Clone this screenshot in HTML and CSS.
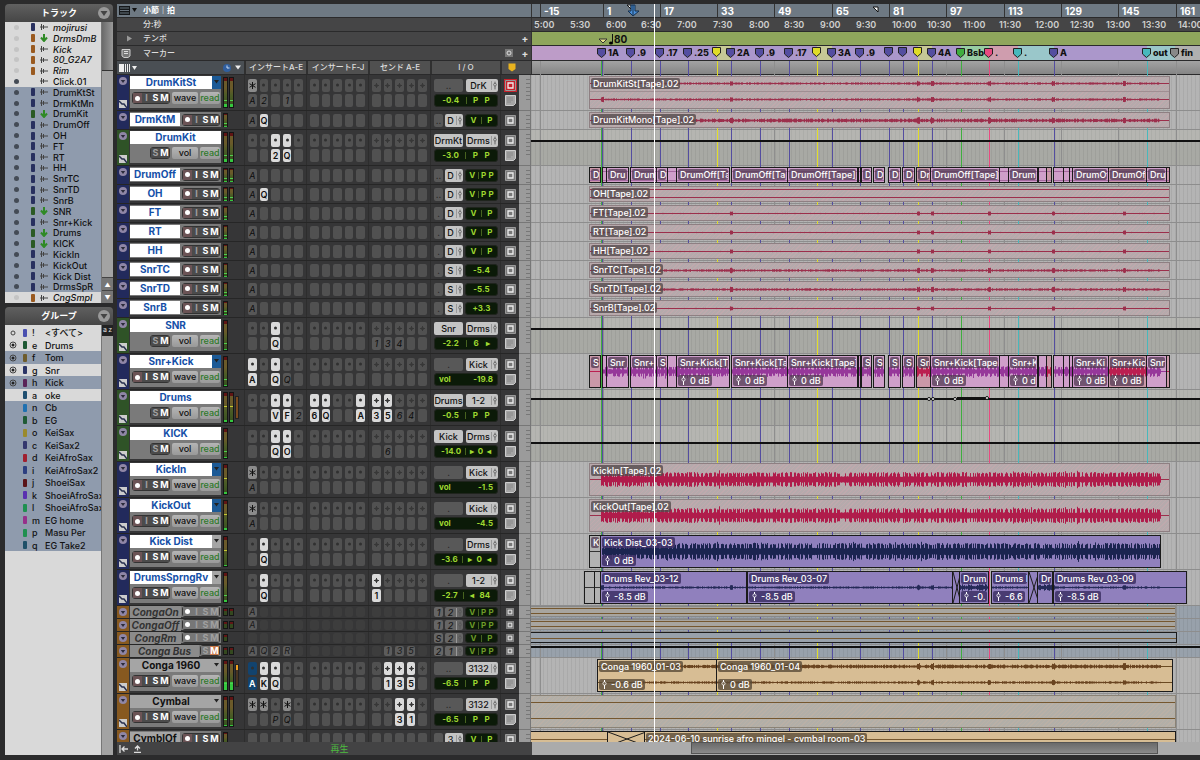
FILE: index.html
```html
<!DOCTYPE html>
<html lang="ja">

<head>
    <meta charset="UTF-8">
    <meta name="viewport" content="width=device-width, initial-scale=1.0">
    <title>Edit Window</title>
    <link rel="stylesheet" href="styles.css">
</head>

<body>

    <!-- Track list and group list -->
    <aside class="sidebar">
        <section class="panel">
            <header class="panel-header">
                <h2>トラック</h2>
                <button class="round-button" aria-label="トラックメニュー"><svg viewBox="0 0 12 12"><path d="M2.5 4h7L6 9z"/></svg></button>
            </header>
            <div class="panel-body track-panel">
                <ul class="list" id="track-list"></ul>
                <div class="side-scroll">
                    <div class="side-thumb"></div>
                    <button aria-label="上へ">▲</button>
                    <button aria-label="下へ">▼</button>
                </div>
            </div>
        </section>

        <section class="panel group-section">
            <header class="panel-header">
                <h2>グループ</h2>
                <button class="round-button" aria-label="グループメニュー"><svg viewBox="0 0 12 12"><path d="M2.5 4h7L6 9z"/></svg></button>
            </header>
            <div class="panel-body group-panel">
                <ul class="list group-list" id="group-list"></ul>
                <div class="side-scroll"><div class="sort-badge"><span>a</span><span>z</span></div></div>
            </div>
        </section>
    </aside>

    <main class="edit">
        <!-- Rulers -->
        <div class="ruler ruler-bars">
            <div class="ruler-name">
                <svg class="ruler-icon" viewBox="0 0 18 9"><path d="M0 0h11v9H0z" fill="#15181b"/><path d="M1 2h9M1 4.500h9M1 7h9" stroke="#69747e"/><path d="M13 2h5l-2.500 4z" fill="#111"/></svg>
                <b>小節｜拍</b>
            </div>
            <div class="ruler-lane" id="bar-ruler"></div>
        </div>
        <div class="ruler ruler-time">
            <div class="ruler-name"><i class="ruler-icon"></i><span>分:秒</span></div>
            <div class="ruler-lane" id="time-ruler"></div>
        </div>
        <div class="ruler ruler-tempo">
            <div class="ruler-name">
                <svg class="ruler-icon" viewBox="0 0 18 9"><path d="M8 1.500l5 3-5 3z" fill="#999"/></svg>
                <span>テンポ</span>
                <button class="plus" aria-label="テンポを追加">+</button>
            </div>
            <div class="ruler-lane" id="tempo-ruler"></div>
        </div>
        <div class="ruler ruler-marker">
            <div class="ruler-name">
                <svg class="ruler-icon" viewBox="0 0 18 9"><path d="M3 .5h8v6.500l-2 1.500H5L3 7z" fill="#777" stroke="#ccc"/><path d="M5 2.500h4M5 4.500h4" stroke="#ddd"/></svg>
                <span>マーカー</span>
                <svg class="ruler-target" viewBox="0 0 8 8"><path d="M0 0h8v8H0z" fill="#777"/><circle cx="4" cy="4" r="2" fill="none" stroke="#ddd"/></svg>
                <button class="plus" aria-label="マーカーを追加">+</button>
            </div>
            <div class="ruler-lane" id="marker-ruler"></div>
        </div>

        <!-- Column titles -->
        <div class="ruler columns">
            <div class="ruler-name">
                <button class="view-button" aria-label="表示"><svg viewBox="0 0 18 8"><path d="M0 0h5v8H0zM6 0h1v8H6zM8 0h1v8H8zM10 0h1v8h-1zM13 2h5l-2.500 4z" fill="#eee"/></svg></button>
                <button class="clock-button" aria-label="タイムベース"><svg viewBox="0 0 18 8"><circle cx="4" cy="4" r="4" fill="#315f9f"/><path d="M4 1.500V4h2.500" stroke="#cfe0f5" fill="none"/><path d="M12 1.500h6l-3 4z" fill="#eee"/></svg></button>
                <span class="col-title">インサートA-E</span>
                <span class="col-title">インサートF-J</span>
                <span class="col-title">センド A-E</span>
                <span class="col-title col-io">I / O</span>
                <span class="col-title col-note"><svg viewBox="0 0 8 9"><path d="M.5.5h7V6L4 8.500.5 6z" fill="#e9b31f"/></svg></span>
            </div>
            <div class="ruler-lane"></div>
        </div>

        <div class="tracks" id="tracks"></div>

        <footer class="footer">
            <div class="status">
                <button aria-label="先頭へ"><svg viewBox="0 0 9 8"><path d="M1 0v8M9 4H3M5.500 1.500L3 4l2.500 2.500" fill="none" stroke="#ddd" stroke-width="1.300"/></svg></button>
                <button aria-label="書き出し"><svg viewBox="0 0 9 8"><path d="M1 7.300h7M4.500 5.500V1M2 3.500L4.500 1 7 3.500" fill="none" stroke="#ddd" stroke-width="1.300"/></svg></button>
                <span class="play-state">再生</span>
            </div>
            <div class="h-scroll"><div class="h-thumb"></div></div>
        </footer>

        <!-- Marker lines and play cursor run over all lanes -->
        <div class="overlay" id="overlay"></div>
        <div class="overlay cursor-layer"><div class="cursor" id="cursor"></div></div>
    </main>

    <script src="script.js"></script>
</body>

</html>
```
FILE: styles.css
```css
/* General */
* {
    box-sizing: border-box;
}

body {
    display: flex;
    gap: 4px;
    height: 100vh;
    margin: 0;
    padding: 4px 0 5px 5px;
    overflow: hidden;
    background: #2b2b2c;
    color: #ddd;
    font-family: Inter, "Noto Sans CJK JP", sans-serif;
    font-size: 9px;
    line-height: 11px;
}

button {
    margin: 0;
    padding: 0;
    border: none;
    background: none;
    color: inherit;
    font: inherit;
    cursor: pointer;
}

svg {
    display: block;
}

/* Sidebar */
.sidebar {
    display: flex;
    flex-direction: column;
    gap: 4px;
    width: 108px;
    flex: none;
    color: #111;
}

.panel-header {
    position: relative;
    height: 18px;
    border-radius: 4px 4px 0 0;
    background: linear-gradient(#606060, #464646);
    text-align: center;
}

.panel-header h2 {
    margin: 0;
    font-size: 9px;
    line-height: 17px;
    color: #fff;
}

.round-button {
    position: absolute;
    top: 3px;
    right: 3px;
    width: 12px;
    height: 12px;
    border-radius: 50%;
    background: #999;
}

.round-button path {
    fill: #444;
}

.panel-body {
    display: flex;
    background: #a3a3a3;
}

.track-panel {
    height: 281px;
}

.group-section {
    display: flex;
    flex-direction: column;
    flex: 1;
}

.group-panel {
    flex: 1;
}

.list {
    display: flex;
    flex-direction: column;
    flex: 1;
    min-width: 0;
    margin: 0;
    padding: 0;
    list-style: none;
    background: #d9d9d9;
}

.list li {
    display: flex;
    flex: 1;
    align-items: center;
    min-height: 0;
    overflow: hidden;
    font-weight: 500;
    white-space: nowrap;
}

.list li > * {
    flex: none;
}

.track-panel li {
    gap: 5px;
    padding-left: 9px;
}

.list li.selected {
    background: #8f9bad;
}

.list li.italic {
    font-style: italic;
}

.dot {
    width: 5px;
    height: 5px;
    margin-right: 7px;
    border-radius: 50%;
    background: #444b55;
}

.dot.off {
    background: #c4c4c4;
}

.pill {
    width: 4px;
    height: 8px;
    border-radius: 1px;
}

.kind-icon {
    width: 8px;
    height: 8px;
}

.group-list {
    padding-top: 1px;
}

.group-list li {
    flex: 0 0 12px;
    padding-left: 4px;
}

.group-list li:nth-child(odd) {
    flex-basis: 13px;
}

.group-list .radio {
    width: 8px;
    height: 8px;
    margin-right: 6px;
}

.group-list .key {
    width: 13px;
    margin-left: 5px;
}

.side-scroll {
    display: flex;
    flex-direction: column;
    width: 12px;
    flex: none;
    border-left: 1px solid #777;
}

.side-thumb {
    height: 49px;
    margin-bottom: auto;
    border-bottom: 1px solid #333;
    background: linear-gradient(90deg, #6a6a6a, #999);
}

.side-scroll button {
    height: 13px;
    border-top: 1px solid #444;
    background: #777;
    color: #fff;
    font-size: 6px;
}

.sort-badge {
    display: flex;
    justify-content: space-between;
    height: 11px;
    padding: 0 1px;
    background: #222;
    color: #ddd;
    font-size: 7px;
    line-height: 9px;
}

/* Edit window */
.edit {
    position: relative;
    display: flex;
    flex-direction: column;
    flex: 1;
    min-width: 0;
    background: #3b3b3c;
}

.ruler {
    display: flex;
    flex: none;
    height: 14px;
    border-bottom: 1px solid #2a2a2b;
    background: #454546;
}

.ruler-name {
    display: flex;
    align-items: center;
    gap: 6px;
    width: 414px;
    flex: none;
    padding-left: 2px;
    font-size: 8px;
    font-weight: 500;
}

.ruler-icon {
    width: 18px;
    height: 9px;
}

.ruler-lane {
    position: relative;
    flex: 1;
    overflow: hidden;
    border-left: 1px solid #333;
}

.ruler-bars {
    background: #6e7983;
    color: #fff;
}

.plus {
    width: 12px;
    font-size: 10px;
    font-weight: bold;
}

.ruler-tempo .plus,
.ruler-target {
    margin-left: auto;
}

.ruler-target {
    width: 8px;
    height: 8px;
}

.ruler-tempo .ruler-lane {
    background: #8fa65c;
    color: #111;
}

.ruler-marker {
    height: 15px;
}

.ruler-marker .ruler-lane {
    background: #b0b0b0;
    color: #111;
}

.tick {
    position: absolute;
    top: 0;
    height: 100%;
    padding-left: 3px;
    border-left: 1px solid #333;
    font-size: 10px;
    font-weight: 700;
    line-height: 14px;
    white-space: nowrap;
}

.ruler-time .tick {
    padding-left: 1px;
    border-color: transparent;
    font-size: 9px;
    font-weight: 600;
    color: #cfcfcf;
}

.locate {
    position: absolute;
    top: 0;
    width: 14px;
    height: 13px;
}

.tempo-value {
    position: absolute;
    top: 1px;
    display: flex;
    align-items: center;
    font-size: 10px;
    font-weight: 700;
}

.tempo-value svg {
    width: 16px;
    height: 12px;
}

.zone {
    position: absolute;
    top: 0;
    height: 100%;
}

.flag {
    position: absolute;
    top: 1px;
    display: flex;
    gap: 2px;
    align-items: center;
    font-weight: 800;
    line-height: 12px;
    white-space: nowrap;
}

.flag svg {
    width: 9px;
    height: 10px;
}

.columns .ruler-name {
    gap: 0;
    background: #4a4f54;
}

.columns .ruler-lane {
    background: linear-gradient(#a3a3a3, #858585);
}

.view-button {
    width: 18px;
    height: 8px;
    margin-right: auto;
}

.clock-button {
    width: 18px;
    height: 8px;
    margin-right: 3px;
}

.col-title {
    width: 62px;
    border-left: 2px solid #303030;
    background: #505050;
    font-weight: 500;
    line-height: 13px;
    text-align: center;
    white-space: nowrap;
}

.col-io {
    width: 70px;
}

.col-note {
    width: 31px;
    height: 13px;
    padding: 2px 0 0 6px;
}

.col-note svg {
    width: 8px;
    height: 9px;
}

/* Track rows */
.tracks {
    flex: 1;
    min-height: 0;
    overflow: hidden;
}

.track {
    display: flex;
    height: 36px;
}

.track.short {
    height: 19px;
}

.track.thin {
    height: 13px;
}

.strip {
    display: flex;
    flex-direction: column;
    align-items: center;
    justify-content: space-between;
    width: 12px;
    flex: none;
    padding: 2px 0;
    border-bottom: 1px solid #252525;
    background: #222a5c;
}

.strip.green {
    background: #2f5327;
}

.strip.orange {
    background: #875920;
}

.strip svg {
    width: 8px;
    height: 8px;
}

.head {
    display: flex;
    width: 390px;
    flex: none;
    border-bottom: 1px solid #262626;
    background: #363637;
}

.body {
    display: flex;
    flex-wrap: wrap;
    align-content: space-between;
    justify-content: space-between;
    width: 91px;
    flex: none;
    margin: 1px 2px 2px 1px;
    padding-bottom: 2px;
    background: #7a7a7a;
}

.title {
    width: 82px;
    height: 13px;
    overflow: hidden;
    background: #fff;
    color: #1550a8;
    font-size: 10px;
    font-weight: 700;
    line-height: 13px;
    white-space: nowrap;
}

.wide .title {
    width: 100%;
}

.orange-track .title {
    background: #a5a5a5;
    color: #111;
}

.playlist {
    width: 9px;
    height: 13px;
    background: #1c5a96;
}

.playlist.grey {
    background: #a5a5a5;
}

.playlist path {
    fill: #222;
}

.controls {
    display: flex;
    gap: 2px;
    align-items: center;
    justify-content: flex-end;
    width: 100%;
    height: 16px;
    padding: 0 1px;
}

.rism {
    display: flex;
    align-items: center;
    border: 1px solid #333;
    border-radius: 3px;
    background: #555;
}

.rism button {
    width: 9px;
    height: 10px;
    background: #4b4b4b;
    color: #fff;
    font-size: 9px;
    font-weight: 700;
    line-height: 10px;
}

.rism .rec {
    background: #6b5355;
}

.rism .rec svg {
    width: 5px;
    height: 5px;
    margin: 0 auto;
}

.rism .dim {
    color: #a0a0a0;
}

.rism .muted {
    background: #c97a4c;
}

.mode,
.auto {
    width: 26px;
    height: 12px;
    border-radius: 2px;
    background: linear-gradient(#b5b5b5, #999);
    color: #111;
    font-weight: 500;
    line-height: 12px;
}

.auto {
    width: 20px;
    color: #2e7a2a;
}

.short .body,
.thin .body {
    align-items: center;
    align-content: center;
    flex-wrap: nowrap;
    padding: 0;
}

.short .title {
    width: 50px;
}

.short .controls,
.thin .controls {
    width: auto;
    height: 12px;
    flex: none;
}

.thin .body {
    margin: 0 2px 1px 1px;
}

.thin .title {
    width: auto;
    height: 12px;
    flex: 1;
    background: #8b8b8b;
    color: #333;
    font-style: italic;
    line-height: 12px;
}

.thin .rism button {
    height: 9px;
    background: #777;
    line-height: 9px;
}

.thin .rism .muted {
    background: #c97a4c;
}

.meters {
    display: flex;
    gap: 1px;
    width: 20px;
    flex: none;
    margin: 2px 0;
}

.meter {
    position: relative;
    width: 5px;
    border: 1px solid #151515;
    background: linear-gradient(#601414 0 12%, #6b5a2a 12% 35%, #4c5c26 60%, #35501f);
}

.meter .level {
    position: absolute;
    bottom: 0;
    left: 0;
    width: 100%;
    background: #35c83f;
}

.meter .peak {
    position: absolute;
    left: 0;
    width: 100%;
    height: 1px;
    background: #4fd04f;
}

.meter .peak.high {
    background: #c5c832;
}

.gr {
    width: 4px;
    margin: 4px 0;
    border: 1px solid #222;
    background: #7a4a1e;
}

.gr.hot {
    background: linear-gradient(#f0a020 25%, #4a3520 25%);
}

.thin .meter {
    background: linear-gradient(#601616 40%, #34481f 40%);
}

.thin .level,
.thin .peak {
    display: none;
}

.slots {
    display: grid;
    grid-template-columns: repeat(5, 1fr);
    gap: 2px 3px;
    align-content: center;
    width: 62px;
    flex: none;
    padding: 0 3px;
    border-left: 1px solid #2d2d2d;
}

.first-slots {
    margin-left: 1px;
}

.slot {
    height: 13px;
    border-radius: 2px;
    background: #515151;
    color: #2a2a2a;
    font-size: 9px;
    line-height: 13px;
}

.slot svg {
    width: 7px;
    height: 7px;
    margin: 0 auto;
}

.slot.dim {
    background: #575757;
    color: #0c0c0c;
    font-style: italic;
}

.thin .slot {
    height: 10px;
    background: #3d3d3d;
    line-height: 10px;
}

.thin .slot.dim {
    background: #5c5c5c;
    color: #1a1a1a;
}

.slot.lit {
    background: #dadada;
    color: #111;
    font-weight: 600;
}

.slot.star {
    background: #8b8b8b;
    color: #111;
}

.slot.blue {
    background: #12436e;
    color: #fff;
    font-weight: 600;
}

.io {
    display: flex;
    flex-wrap: wrap;
    gap: 2px 3px;
    align-content: center;
    width: 70px;
    flex: none;
    padding: 0 2px 0 3px;
    border-left: 1px solid #2d2d2d;
}

.port {
    display: flex;
    align-items: center;
    justify-content: center;
    width: 29px;
    height: 13px;
    overflow: hidden;
    border-radius: 2px;
    background: #c4c4c4;
    color: #111;
    font-weight: 500;
}

.port.off {
    background: #585858;
    color: #222;
}

.port.out {
    width: 32px;
    justify-content: flex-end;
}

.port.out span {
    flex: 1;
    text-align: center;
}

.port svg {
    width: 7px;
    height: 9px;
    flex: none;
    color: #555;
    border-left: 1px solid #999;
}

.led {
    display: flex;
    align-items: center;
    justify-content: space-around;
    width: 64px;
    height: 13px;
    padding: 0 4px;
    border: 1px solid #1f241d;
    border-radius: 3px;
    background: #0b1a08;
    color: #9fd830;
    font-size: 8px;
    font-weight: 700;
    line-height: 11px;
    white-space: nowrap;
}

.led.spread {
    justify-content: space-between;
}

.led i {
    width: 1px;
    height: 7px;
    background: #47631f;
}

.short .io,
.thin .io {
    flex-wrap: nowrap;
    align-items: center;
    gap: 2px;
}

.short .port,
.thin .port {
    width: 9px;
}

.short .port.out,
.thin .port.out {
    width: 18px;
}

.short .led,
.thin .led {
    width: 33px;
    padding: 0 2px;
}

.thin .port,
.thin .led {
    height: 10px;
}

.thin .port {
    background: #666;
    color: #1a1a1a;
    font-style: italic;
}

.thin .led {
    color: #6f9c28;
    line-height: 8px;
}

.notes {
    display: flex;
    flex-direction: column;
    align-items: center;
    justify-content: center;
    gap: 4px;
    flex: 1;
    border-left: 1px solid #2d2d2d;
}

.notes svg {
    width: 11px;
    height: 11px;
}

.notes .red {
    outline: 1px solid #c8202a;
}

.thin .notes svg {
    width: 8px;
    height: 8px;
}

.scale {
    width: 12px;
    flex: none;
    border-right: 1px solid #777;
    border-bottom: 1px solid #777;
    background: repeating-linear-gradient(#777 0 1px, transparent 1px 4px) 7px 4px / 5px 24px no-repeat #9b9b9b;
}

/* Lanes and clips */
.lane {
    position: relative;
    flex: 1;
    overflow: hidden;
    border-bottom: 1px solid #8d8d8d;
    background: repeating-linear-gradient(90deg, rgba(0, 0, 0, .06) 0 1px, transparent 1px 4px) #b4b4b4;
}

.lane.automation {
    background-color: #a8a9a4;
}

.lane.blue {
    background-color: #98a1ab;
}

.lane-top {
    background: rgba(255, 255, 255, .15);
}

.automation-line {
    position: relative;
    z-index: 2;
    height: 2px;
    background: #111;
}

.points {
    position: absolute;
    z-index: 3;
    top: 6px;
    width: 62px;
    height: 8px;
}

.clip {
    position: absolute;
    z-index: 2;
    top: 1px;
    bottom: 1px;
    overflow: hidden;
    border: 1px solid #1b1b1b;
}

.clip > svg {
    position: absolute;
    top: 0;
    left: 0;
}

.clip.hatched {
    border-color: #8e7f82;
    background: repeating-linear-gradient(135deg, #b5aaac 0 2px, #bfa9ad 2px 3px);
}

.clip.pink {
    background: #cf9fca;
}

.clip.rose {
    background: #ca98a8;
}

.clip.purple {
    background: #9080bd;
}

.clip.grey {
    background: #b2b2b2;
}

.clip.tan {
    background: #d7bd94;
}

.clip.stone {
    border-color: #8a8275;
    background: repeating-linear-gradient(135deg, #b2afa8 0 2px, #bab0a6 2px 3px);
}

.clip.brown {
    top: 0;
    border-color: #888;
    background: #a8a59f;
}

.clip.steel {
    top: 0;
    background: #98a1ab;
}

.clip-name,
.clip-gain {
    position: absolute;
    top: 1px;
    left: 1px;
    max-width: calc(100% - 2px);
    height: 11px;
    padding: 0 2px;
    overflow: hidden;
    border-radius: 2px;
    background: rgba(80, 58, 82, .75);
    color: #fff;
    font-weight: 500;
    white-space: nowrap;
}

.hatched .clip-name {
    background: rgba(85, 75, 78, .8);
}

.purple .clip-name,
.purple .clip-gain {
    background: rgba(65, 52, 105, .9);
}

.tan .clip-name,
.tan .clip-gain {
    background: rgba(90, 75, 55, .8);
}

.clip-gain {
    top: auto;
    bottom: 1px;
    display: flex;
    gap: 3px;
    align-items: center;
}

.clip-gain svg {
    width: 7px;
    height: 9px;
    flex: none;
}

/* Overlay */
.overlay {
    position: absolute;
    z-index: 1;
    top: 57px;
    right: 0;
    bottom: 13px;
    left: 415px;
    overflow: hidden;
    pointer-events: none;
}

.cursor-layer {
    z-index: 4;
    top: 0;
}

.line,
.cursor {
    position: absolute;
    top: 0;
    width: 1px;
    height: 100%;
}

.cursor {
    background: #fff;
}

/* Footer */
.footer {
    display: flex;
    height: 13px;
    flex: none;
}

.status {
    display: flex;
    gap: 5px;
    align-items: center;
    width: 415px;
    padding-left: 2px;
    background: #434344;
}

.status svg {
    width: 9px;
    height: 8px;
}

.play-state {
    flex: 1;
    color: #4dbb3f;
    text-align: center;
}

.h-scroll {
    flex: 1;
    padding: 0 42px 0 159px;
    background: #ababab;
}

.h-thumb {
    height: 12px;
    border: 1px solid #555;
    background: linear-gradient(#6a6a6a, #8a8a8a);
}
```
FILE: script.js
```javascript
// Window x of the first timeline pixel, all positions below are window x
const START = 532;

const NAVY = '#28305f', GREEN = '#2b5a24', RUST = '#9a5a20';

const sideTracks = [
    ['mojirusi', NAVY, 'w', 'i'], ['DrmsDmB', RUST, 'a', 'i'], ['Kick', RUST, 'w', 'i'],
    ['80_G2A7', RUST, 'w', 'i'], ['Rim', RUST, 'w', 'i'], ['Click.01', 'transparent', 'w', 'n'],
    ['DrumKtSt', NAVY, 'w', 's'], ['DrmKtMn', NAVY, 'w', 's'], ['DrumKit', GREEN, 'a', 's'],
    ['DrumOff', NAVY, 'w', 's'], ['OH', NAVY, 'w', 's'], ['FT', NAVY, 'w', 's'], ['RT', NAVY, 'w', 's'],
    ['HH', NAVY, 'w', 's'], ['SnrTC', NAVY, 'w', 's'], ['SnrTD', NAVY, 'w', 's'], ['SnrB', NAVY, 'w', 's'],
    ['SNR', GREEN, 'a', 's'], ['Snr+Kick', NAVY, 'w', 's'], ['Drums', GREEN, 'a', 's'],
    ['KICK', GREEN, 'a', 's'], ['KickIn', NAVY, 'w', 's'], ['KickOut', NAVY, 'w', 's'],
    ['Kick Dist', NAVY, 'w', 's'], ['DrmsSpR', NAVY, 'w', 's'], ['CngSmpl', RUST, 'w', 'i']
];

const groups = [
    ['!', '&lt;すべて&gt;', '#4a50b0', 0, 'o'], ['e', 'Drums', '#1f5a35', 0, 'x'], ['f', 'Tom', '#6e5c2c', 1, 'x'],
    ['g', 'Snr', '#2c3566', 0, 'x'], ['h', 'Kick', '#5a2458', 1, 'x'], ['a', 'oke', '#1f4f70', 0, ''],
    ['n', 'Cb', '#1f70b0', 1, ''], ['b', 'EG', '#1f5a35', 1, ''], ['o', 'KeiSax', '#9a8a2c', 1, ''],
    ['c', 'KeiSax2', '#34386e', 1, ''], ['d', 'KeiAfroSax', '#a02030', 1, ''], ['i', 'KeiAfroSax2', '#2c3f80', 1, ''],
    ['j', 'ShoeiSax', '#5a1418', 1, ''], ['k', 'ShoeiAfroSax', '#5a30b0', 1, ''], ['l', 'ShoeiAfroSax2', '#1f9050', 1, ''],
    ['m', 'EG home', '#96308a', 1, ''], ['p', 'Masu Per', '#1f9050', 1, ''], ['q', 'EG Take2', '#1f5068', 1, '']
];

const COLORS = { p: '#544da0', y: '#e0dc28', g: '#3fae3f', k: '#e84a80', c: '#48b8bc', n: '#888' };

const markers = [
    [602, 'p', '1A'], [631, 'p', '.9'], [660, 'p', '.17'], [688, 'p', '.25'], [717, 'y', ''],
    [731, 'p', '2A'], [760, 'p', '.9'], [789, 'p', '.17'], [817, 'y', ''], [832, 'p', '3A'],
    [860, 'p', '.9'], [889, 'p', ''], [903, 'p', ''], [918, 'y', ''], [932, 'p', '4A'],
    [961, 'g', 'Bsb'], [989, 'k', '.'], [1018, 'c', '.'], [1054, 'p', 'A'], [1147, 'c', 'out'], [1175, 'n', 'fin']
];

const zones = [
    [532, 602, '#bd9cc8'], [602, 717, '#ab97cb'], [717, 731, '#c6c896'], [731, 817, '#ab97cb'],
    [817, 832, '#c6c896'], [832, 918, '#ab97cb'], [918, 932, '#c6c896'], [932, 961, '#ab97cb'],
    [961, 989, '#97cca2'], [989, 1018, '#cf9dae'], [1018, 1054, '#9ac7ca'], [1054, 1147, '#ab97cb'],
    [1147, 1175, '#9ac7ca'], [1175, 1210, '#b0b0b0']
];

// Edit points shared by the DrumOff and Snr+Kick tracks
const cuts = [
    [590, 602, 1, 'rose'], [603, 608, 0], [607, 630, 3], [631, 658, 4], [657, 669, 1], [668, 678, 0],
    [677, 731, 10], [732, 789, 11], [788, 859, 15], [859, 862, 0], [862, 873, 1], [874, 886, 1],
    [889, 902, 1], [903, 916, 1], [917, 932, 2, 'rose'], [931, 1001, 14], [1000, 1010, 0], [1009, 1039, 5],
    [1039, 1048, 0], [1047, 1053, 0, 'rose'], [1054, 1065, 0], [1064, 1071, 0], [1070, 1074, 0],
    [1073, 1110, 6], [1109, 1148, 7, 'rose'], [1147, 1168, 3], [1167, 1171, 0, 'rose']
];

const cutClips = (name, gain) => cuts.map(([a, b, chars, color]) => ({
    a, b, c: color || 'pink', name: chars ? name.slice(0, chars) : '',
    gain: gain && b - a > 28 && chars > 4 ? '0 dB' : '', wave: gain ? 'snare' : 'lines'
}));

const tape = (name, wave) => [{ a: 590, b: 1171, c: 'hatched', name: name + '[Tape].02', wave }];

// slots: '-x' inactive, '*x' offline, '!x' clipped, 'x' active
const tracks = [
    { n: 'DrumKitSt', pl: 'blue', m: 2, s: '*A,-2,,-1', io: ['..', 'DrK'], led: '-0.4 | P P', red: 1, lv: 12, clips: tape('DrumKitSt', 'stereo') },
    { n: 'DrmKtM', z: 'short', m: 1, s: '-A,Q', io: ['..', 'D'], led: 'V | P', clips: tape('DrumKitMono', 'mono') },
    { n: 'DrumKit', aux: 1, m: 2, s: ',,2,Q', io: ['DrmKt', 'Drms'], led: '-3.0 | P P', lv: 10, line: 10 },
    { n: 'DrumOff', z: 'short', i: 1, m: 2, s: '-A', io: ['..', 'D'], led: 'V | P P', clips: cutClips('DrumOff[Tape].(', 0) },
    { n: 'OH', z: 'short', m: 2, s: '-A,Q', io: ['..', 'D'], led: 'V | P P', clips: tape('OH', 'flat2') },
    { n: 'FT', z: 'short', m: 1, s: '-A', io: ['.', 'D'], led: 'V | P', clips: tape('FT', 'flat') },
    { n: 'RT', z: 'short', m: 1, s: '-A', io: ['.', 'D'], led: 'V | P', clips: tape('RT', 'flat') },
    { n: 'HH', z: 'short', m: 1, s: '-A', io: ['.', 'D'], led: 'V | P', clips: tape('HH', 'flat') },
    { n: 'SnrTC', z: 'short', m: 1, s: '-A', io: ['.', 'S'], led: '-5.4', clips: tape('SnrTC', 'soft') },
    { n: 'SnrTD', z: 'short', m: 1, s: '-A', io: ['.', 'S'], led: '-5.5', clips: tape('SnrTD', 'soft') },
    { n: 'SnrB', z: 'short', m: 1, s: '-A', io: ['.', 'S'], led: '+3.3', clips: tape('SnrB', 'flat') },
    { n: 'SNR', aux: 1, m: 1, s: ',,Q,,,,,,,,-1,-3,-4', io: ['Snr', 'Drms'], led: '-2.2 | 6 ▸', lv: 4, line: 10 },
    { n: 'Snr+Kick', pl: 'blue', i: 1, m: 1, s: 'A,,Q,-Q', io: ['.', 'Kick'], led: 'vol -19.8', clips: cutClips('Snr+Kick[Tape].', 1) },
    { n: 'Drums', aux: 1, m: 2, gr: 'low', s: ',,V,F,-2,6,Q,,,A,3,5,-6,-4', io: ['Drums', '1-2'], led: '-0.5 | P P', lv: 8, hi: 1, line: 8, points: 1 },
    { n: 'KICK', aux: 1, m: 1, s: ',,Q,O,,,,,,,,-6', io: ['Kick', 'Drms'], led: '-14.0 | ▸ 0 ◂', line: 16 },
    { n: 'KickIn', pl: 'blue', m: 1, s: '*A', io: ['.', 'Kick'], led: 'vol -1.5', lv: 6, hi: 1, clips: tape('KickIn', 'kick') },
    { n: 'KickOut', pl: 'blue', m: 1, s: '*A', io: ['.', 'Kick'], led: 'vol -4.5', lv: 6, hi: 1, clips: tape('KickOut', 'kick') },
    { n: 'Kick Dist', pl: 'grey', i: 1, m: 1, s: ',Q', io: ['.', 'Drms'], led: '-3.6 | ▸ 0 ◂', lv: 5, hi: 1, clips: [
        { a: 590, b: 602, c: 'grey', name: 'K', wave: 'line' },
        { a: 601, b: 1162, c: 'purple', name: 'Kick Dist_03-03', gain: '0 dB', wave: 'dist' }] },
    { n: 'DrumsSprngRv', pl: 'grey', i: 1, m: 1, s: ',Q,,,,,,,,,1', io: ['.', '1-2'], led: '-2.7 | ◂ 84', lv: 6, clips: [
        { a: 585, b: 596, c: 'grey', wave: 'line' }, { a: 595, b: 602, c: 'grey', wave: 'line' },
        { a: 601, b: 748, c: 'purple', name: 'Drums Rev_03-12', gain: '-8.5 dB', wave: 'reverb' },
        { a: 748, b: 954, c: 'purple', name: 'Drums Rev_03-07', gain: '-8.5 dB', wave: 'reverb' },
        { a: 953, b: 961, c: 'purple', wave: 'fade' },
        { a: 960, b: 990, c: 'purple', name: 'Drum', gain: '-0.', wave: 'loud' },
        { a: 992, b: 1030, c: 'purple', name: 'Drums I', gain: '-6.6', wave: 'reverb' },
        { a: 1029, b: 1039, c: 'purple', wave: 'fade' },
        { a: 1038, b: 1054, c: 'purple', name: 'Dr', wave: 'loud' },
        { a: 1054, b: 1188, c: 'purple', name: 'Drums Rev_03-09', gain: '-8.5 dB', wave: 'reverb' }] },
    { n: 'CongaOn', z: 'thin', o: 1, m: 2, s: '-A', io: ['1', '2'], led: 'V | P P', blue: 1, clips: [{ a: 531, b: 1177, c: 'brown', wave: 'tan2' }] },
    { n: 'CongaOff', z: 'thin', o: 1, m: 2, s: '-A', io: ['1', '2'], led: 'V | P P', blue: 1, clips: [{ a: 531, b: 1177, c: 'brown', wave: 'tan2' }] },
    { n: 'CongRm', z: 'thin', o: 1, m: 1, s: '', io: ['S', '2'], led: 'V | P', blue: 1, clips: [{ a: 531, b: 1178, c: 'steel', wave: 'tan1' }] },
    { n: 'Conga Bus', z: 'thin', o: 1, aux: 1, mute: 1, m: 2, s: '-A,-Q,-2,-R,,,,,,,,-1,-3,-5', io: ['2', '1'], led: 'V | P P', blue: 1, line: 1 },
    { n: 'Conga 1960', o: 1, i: 1, pl: 'grey', m: 2, gr: 'hot', s: '!A,K,Q,,,,,,,,,1,3,5', io: ['..', '3132'], led: '-6.5 | P P', lv: 28, clips: [
        { a: 598, b: 718, c: 'tan', name: 'Conga 1960_01-03', gain: '-0.6 dB', wave: 'conga' },
        { a: 717, b: 1174, c: 'tan', name: 'Conga 1960_01-04', gain: '0 dB', wave: 'conga' }] },
    { n: 'Cymbal', o: 1, pl: 'grey', m: 2, s: '*,*,-P,*Q,,,,,,,,,3,1', io: ['..', '3132'], led: '-6.5 | P P', clips: [{ a: 531, b: 1177, c: 'stone', wave: 'tan2' }] },
    { n: 'CymblOf', z: 'short', o: 1, i: 1, m: 1, s: '', io: ['.', '3'], led: 'V | P', clips: [
        { a: 531, b: 609, c: 'tan', wave: 'tan1' }, { a: 608, b: 646, c: 'tan', wave: 'fade' },
        { a: 645, b: 1177, c: 'tan', name: '2024-06-10 sunrise afro mingel - cymbal room-03', wave: 'tan1' }] }
];

const blips = [602, 731, 918, 932, 989, 1053, 1124];

// Small repeatable random generator so that the waveforms stay the same
function random(seed) {
    let s = seed * 7919 + 17;
    return () => (s = (s * 16807) % 2147483647) / 2147483647;
}

function bars(a, b, from, to, mid, amp, color, seed) {
    const rnd = random(seed);
    const loud = amp > 5;
    let d = '';
    for (let x = Math.max(a, from); x < Math.min(b, to); x++) {
        let h = amp * (loud ? 0.75 + 0.25 * rnd() : 0.35 + 0.65 * rnd());
        if (!loud && blips.some(p => Math.abs(p - x) < 2)) h += 1.5;
        if (loud && rnd() > 0.985) h += 2;
        if (loud && (x % 4 === 0 || rnd() > 0.85)) h *= 0.45;
        d += `M${x - a + 0.5} ${(mid - h).toFixed(1)}V${(mid + h).toFixed(1)}`;
    }
    return `<path d="${d}" stroke="${color}" fill="none"/>`;
}

const flat = (w, y, color) => `<path d="M0 ${y}H${w}" stroke="${color}"/>`;

function waveform(clip, h, seed) {
    const { a, b, wave } = clip;
    const w = b - a;
    const mid = Math.floor(h / 2) + 0.5;
    const q1 = Math.floor(h / 4) - 0.5;
    const q3 = Math.floor(h * 3 / 4) - 0.5;
    const red = '#9c2f4c';
    let out = '';
    switch (wave) {
        case 'stereo':
            out = flat(w, q1, red) + flat(w, q3, red) + flat(w, mid - 1, '#a08e92') +
                bars(a, b, 600, 1160, q1, 1.2, red, 3) + bars(a, b, 600, 1160, q3, 1.2, red, 3);
            break;
        case 'mono': out = flat(w, mid, red) + bars(a, b, 600, 1160, mid, 2, red, seed); break;
        case 'soft': out = flat(w, mid, red) + bars(a, b, 600, 1160, mid, 1.3, red, seed); break;
        case 'flat': out = flat(w, mid, red) + bars(a, b, 600, 1160, mid, 0.6, red, seed); break;
        case 'flat2': out = flat(w, q1, red) + flat(w, q3 + 1, red); break;
        case 'lines': out = flat(w, 3.5, '#a568a0') + flat(w, 12.5, '#a568a0'); break;
        case 'snare': {
            const color = clip.c === 'rose' ? '#bb1f50' : '#96389a';
            out = flat(w, mid, color) + bars(a, b, 600, 1161, mid, 5.5, color, a);
            break;
        }
        case 'kick': out = flat(w, mid, red) + bars(a, b, 601, 1161, mid, 7.5, '#b01c4b', 5); break;
        case 'dist': out = bars(a, b, 602, 1162, mid, 8.5, '#1b2450', 8); break;
        case 'reverb': out = flat(w, mid, '#252a58') + bars(a, b, 601, 1160, mid, 1.2, '#252a58', a); break;
        case 'loud': out = bars(a, b, 900, 1160, mid, 3.5, '#252a58', a); break;
        case 'line': out = flat(w, mid, '#333'); break;
        case 'fade': out = `<path d="M0 0L${w} ${h}M0 ${h}L${w} 0" stroke="#1b1b1b" fill="none"/>`; break;
        case 'conga':
            out = flat(w, q1, '#6a4a22') + flat(w, q3, '#6a4a22') +
                bars(a, b, 640, 1161, q1, 2, '#6a4420', a) + bars(a, b, 640, 1161, q3, 1.3, '#6a4420', a + 1);
            break;
        case 'tan2': out = flat(w, q1, '#75572f') + flat(w, q3, '#75572f'); break;
        case 'tan1': out = flat(w, mid, '#75572f'); break;
    }
    return `<svg width="${w}" height="${h}">${out}</svg>`;
}

const faderIcon = '<svg viewBox="0 0 7 9"><path d="M3.500 0v2M3.500 5v4" stroke="currentColor"/><circle cx="3.500" cy="3.500" r="1.600" fill="none" stroke="currentColor" stroke-width=".8"/></svg>';
const dotIcon = '<svg viewBox="0 0 7 7"><circle cx="3.500" cy="3" r="1.500" fill="#303030"/></svg>';
const sendIcon = '<svg viewBox="0 0 7 7"><path d="M3.500 1v5M1 3.500h5" stroke="#383838"/><circle cx="3.500" cy="3.500" r="1.500" fill="#383838"/></svg>';
const starIcon = '<svg viewBox="0 0 7 7"><path d="M3.500 0v7M.5 1.700l6 3.600M.5 5.300l6-3.600" stroke="#111"/></svg>';
const openIcon = '<svg viewBox="0 0 8 8"><circle cx="4" cy="4" r="4" fill="#8f86a6"/><path d="M1.800 3h4.400L4 6z" fill="#2b2b3b"/></svg>';
const elasticIcon = '<svg viewBox="0 0 8 8"><path d="M0 0h8v8H0z" fill="#ccc"/><path d="M0 1l3 3h2l3 4" stroke="#28304f" stroke-width="1.500" fill="none"/></svg>';
const targetIcon = '<svg viewBox="0 0 11 11"><path d="M.5.5h10v10H.5z" fill="#777" stroke="#999"/><path d="M3 3h5v5H3z" fill="none" stroke="#eee" stroke-width="1.300"/></svg>';
const noteIcon = '<svg viewBox="0 0 11 11"><path d="M.5.5h10v8l-2 2H.5z" fill="#a5a5a5" stroke="#ccc"/><path d="M2 3h6M2 5h6M2 7h4" stroke="#888"/></svg>';

function slotGroup(t, first) {
    const all = t.s.split(',');
    let top = '', bottom = '';
    for (let i = first; i < first + 5; i++) {
        const v = all[i] || '';
        const flag = /^[-*!]/.test(v) ? v[0] : '';
        const text = flag ? v.slice(1) : v;
        const lit = flag === '!' ? 'blue' : !flag && text ? 'lit' : '';
        const icon = flag === '*' ? starIcon : first === 10 ? sendIcon : dotIcon;
        top += `<button class="slot ${flag === '*' ? 'star' : lit}" aria-label="スロット">${icon}</button>`;
        bottom += `<button class="slot ${lit || (text ? 'dim' : '')}" aria-label="スロット ${text}">${text}</button>`;
    }
    return `<div class="slots ${first ? '' : 'first-slots'}">${t.z ? '' : top}${bottom}</div>`;
}

function meters(t) {
    let out = '';
    for (let i = 0; i < t.m; i++) {
        out += `<div class="meter"><div class="level" style="height:${t.lv || 4}%"></div><div class="peak ${t.hi ? 'high' : ''}" style="bottom:${t.hi ? 52 : 20}%"></div></div>`;
    }
    return `<div class="meters">${out}${t.gr ? `<div class="gr ${t.gr}"></div>` : ''}</div>`;
}

function controls(t) {
    const rec = t.aux ? '' : `<button class="rec" aria-label="録音"><svg viewBox="0 0 6 6"><circle cx="3" cy="3" r="3" fill="#fff"/></svg></button><button class="${t.i ? '' : 'dim'}">I</button>`;
    const modes = t.z ? '' : `<button class="mode">${t.aux ? 'vol' : 'wave'}</button><button class="auto">read</button>`;
    const dim = t.z === 'thin' ? 'dim' : '';
    return `<div class="controls"><div class="rism">${rec}<button class="${t.aux ? 'dim' : dim}">S</button><button class="${t.mute ? 'muted' : dim}">M</button></div>${modes}</div>`;
}

function led(text) {
    return text.split(' ').map(p => p === '|' ? '<i></i>' : `<span>${p}</span>`).join('');
}

function lane(t, index) {
    const h = t.z === 'short' ? 14 : t.z === 'thin' ? 10 : 31;
    let out = '';
    if (t.line) out += `<div class="lane-top" style="height:${t.line}px"></div><div class="automation-line"></div>`;
    if (t.points) {
        out += `<svg class="points" viewBox="0 0 62 8" style="left:${928 - START}px"><path d="M26 2h7v2h-7zM30 1h30v2H30z" fill="#111"/><g fill="#fff" stroke="#111"><circle cx="2" cy="3" r="1.500"/><circle cx="6" cy="3" r="1.500"/><circle cx="28" cy="3" r="1.500"/><circle cx="60" cy="2" r="1.500"/></g></svg>`;
    }
    (t.clips || []).forEach(c => {
        out += `<div class="clip ${c.c}" style="left:${c.a - START}px;width:${c.b - c.a}px">${waveform(c, h, index + 1)}` +
            (c.name ? `<span class="clip-name">${c.name}</span>` : '') +
            (c.gain ? `<span class="clip-gain">${faderIcon}${c.gain}</span>` : '') + '</div>';
    });
    return `<div class="lane ${t.blue ? 'blue' : t.line ? 'automation' : ''}">${out}</div>`;
}

function trackRow(t, index) {
    const color = t.o ? 'orange' : t.aux ? 'green' : '';
    const playlist = t.pl ? `<button class="playlist ${t.pl}" aria-label="プレイリスト"><svg viewBox="0 0 9 13"><path d="M2 4h5L4.500 7.500z"/></svg></button>` : '';
    return `<div class="track ${t.z || 'tall'} ${t.o ? 'orange-track' : ''} ${t.pl || t.z ? '' : 'wide'}">
        <div class="strip ${color}">${openIcon}${t.z ? '' : elasticIcon}</div>
        <div class="head">
            <div class="body"><button class="title">${t.n}</button>${playlist}${controls(t)}</div>
            ${meters(t)}${slotGroup(t, 0)}${slotGroup(t, 5)}${slotGroup(t, 10)}
            <div class="io">
                <button class="port ${t.io[0][0] === '.' ? 'off' : ''}">${t.io[0]}</button>
                <button class="port out"><span>${t.io[1]}</span>${faderIcon}</button>
                <div class="led ${t.led.startsWith('vol') ? 'spread' : ''}">${led(t.led)}</div>
            </div>
            <div class="notes">${t.red ? targetIcon.replace('<svg', '<svg class="red"').replace('#777', '#c8202a') : targetIcon}${t.z ? '' : noteIcon}</div>
        </div>
        <div class="scale"></div>${lane(t, index)}
    </div>`;
}

function kindIcon(kind) {
    return kind === 'a'
        ? '<svg class="kind-icon" viewBox="0 0 8 8"><path d="M4 0v6M1 3.500L4 7l3-3.500" stroke="#2f8a25" stroke-width="2" fill="none"/></svg>'
        : '<svg class="kind-icon" viewBox="0 0 8 8"><path d="M0 4h8M1.500 1v6M3.500 2v4" stroke="#444"/></svg>';
}

document.getElementById('track-list').innerHTML = sideTracks.map(([name, color, kind, state]) =>
    `<li class="${state === 's' ? 'selected' : state === 'i' ? 'italic' : ''}"><span class="dot ${state === 'i' ? 'off' : ''}"></span><span class="pill" style="background:${color}"></span>${kindIcon(kind)}<span class="name">${name}</span></li>`).join('');

document.getElementById('group-list').innerHTML = groups.map(([key, name, color, selected, radio]) =>
    `<li class="${selected ? 'selected' : ''}"><svg class="radio" viewBox="0 0 8 8">${radio ? '<circle cx="4" cy="4" r="' + (radio === 'x' ? 3 : 2) + '" fill="none" stroke="#444"/>' : ''}${radio === 'x' ? '<circle cx="4" cy="4" r="1.500" fill="#222"/>' : ''}</svg><span class="pill" style="background:${color}"></span><span class="key">${key}</span><span class="name">${name}</span></li>`).join('');

document.getElementById('tracks').innerHTML = tracks.map(trackRow).join('');

// Rulers
const barX = [[-15, 540]];
for (let i = 0; i <= 10; i++) barX.push([1 + 16 * i, Math.round(602.5 + 57.3 * i)]);
document.getElementById('bar-ruler').innerHTML = barX.map(([n, x]) => `<span class="tick" style="left:${x - START}px">${n}</span>`).join('') +
    `<svg class="locate" style="left:${626 - START}px" viewBox="0 0 14 13"><path d="M1 1h4v4z" fill="#fff" stroke="#111"/><path d="M5 1h4v6h4l-6 5-5-5h3z" fill="#4b8fd8" stroke="#15304f"/><path d="M7 1v10" stroke="#15304f"/></svg>` +
    `<svg class="locate" style="left:${872 - START}px" viewBox="0 0 14 13"><path d="M1 3h5v5z" fill="#fff" stroke="#111"/></svg>`;

let times = '';
for (let i = 0; i <= 18; i++) {
    const sec = 300 + 30 * i;
    times += `<span class="tick" style="left:${Math.round(532 + 35.75 * i) - START}px">${Math.floor(sec / 60)}:${sec % 60 ? '30' : '00'}</span>`;
}
document.getElementById('time-ruler').innerHTML = times;

document.getElementById('tempo-ruler').innerHTML =
    `<span class="tempo-value" style="left:${598 - START}px"><svg viewBox="0 0 16 12"><path d="M1 6h8L5 10z" fill="#e8e28a" stroke="#333"/><ellipse cx="13" cy="10" rx="2" ry="1.500"/><path d="M14.500 1v9" stroke="#111"/></svg>80</span>`;

document.getElementById('marker-ruler').innerHTML =
    zones.map(([a, b, c]) => `<span class="zone" style="left:${a - START}px;width:${b - a}px;background:${c}"></span>`).join('') +
    markers.map(([x, c, text]) => `<span class="flag" style="left:${x - 5 - START}px"><svg viewBox="0 0 9 10"><path d="M.5.5h8v5.500l-4 3.500-4-3.500z" fill="${COLORS[c]}" stroke="#222"/></svg>${text}</span>`).join('');

// Vertical lines
document.getElementById('overlay').innerHTML =
    barX.map(([, x]) => `<div class="line" style="left:${x - START}px;background:#8e8e8e"></div>`).join('') +
    [[601, 'g']].concat(markers.filter(m => m[1] !== 'n')).map(([x, c]) => `<div class="line" style="left:${x - START}px;background:${COLORS[c]}"></div>`).join('');
document.getElementById('cursor').style.left = `${654 - START}px`;
```
